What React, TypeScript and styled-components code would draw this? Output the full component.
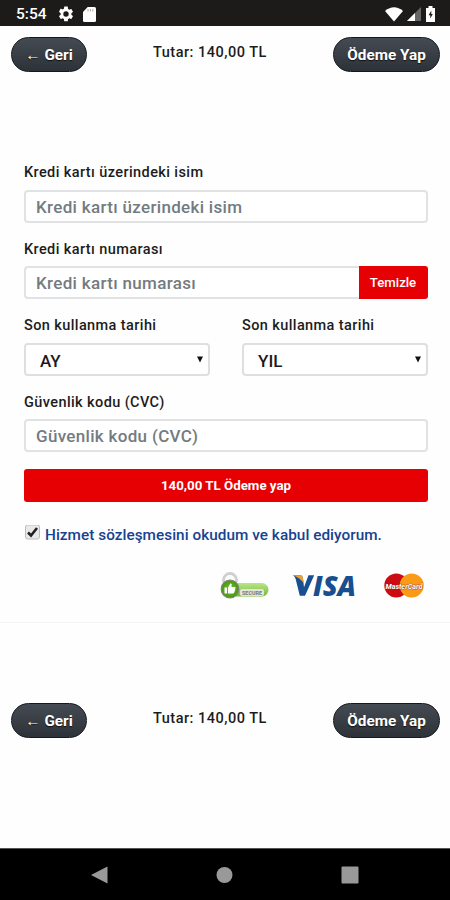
import React from 'react';
import styled, { createGlobalStyle } from 'styled-components';

const Global = createGlobalStyle`
  *, *::before, *::after { box-sizing: border-box; }
  body { margin: 0; background: #fefefe; font-family: Roboto, sans-serif; color: #1c1c1c; }
  input, button, select { font-family: inherit; }
`;

const Screen = styled.div`
  width: 450px;
  height: 900px;
  display: flex;
  flex-direction: column;
  background: #fefefe;
  overflow: hidden;
`;

const StatusBar = styled.header`
  height: 26px;
  flex: none;
  display: flex;
  align-items: center;
  padding: 2px 14px 0 16px;
  background: #1c1b19;
  color: #fff;
`;

const Clock = styled.span`
  width: 41px;
  font-size: 15.5px;
  font-weight: 500;
  line-height: 24px;
`;

const StatusGroup = styled.div<{ $gap: number; $end?: boolean }>`
  display: flex;
  align-items: center;
  gap: ${p => p.$gap}px;
  margin-left: ${p => (p.$end ? 'auto' : '0')};
  svg { display: block; }
`;

const ActionBar = styled.div`
  height: 35px;
  flex: none;
  display: grid;
  grid-template-columns: 76px 1fr 107px;
  padding: 0 10px 0 11px;
`;

const PillButton = styled.button`
  height: 35px;
  padding: 0;
  border: 1px solid #15191d;
  border-radius: 18px;
  background: linear-gradient(#454b52, #2c3238);
  color: #fff;
  font-size: 15.3px;
  font-weight: 700;
  text-shadow: 0 1px 1px #111;
  white-space: nowrap;
`;

const Total = styled.div`
  padding-left: 66px;
  font-size: 14.5px;
  font-weight: 500;
  line-height: 32px;
  letter-spacing: 0.5px;
  white-space: nowrap;
`;

const Card = styled.main`
  height: 551px;
  flex: none;
  padding: 91px 22px 0 24px;
  border-bottom: 1px solid #f5f5f5;
  margin-bottom: 80px;
`;

const Field = styled.div`
  height: 76.6px;
`;

const Label = styled.label`
  display: block;
  height: 26.5px;
  font-size: 14.5px;
  font-weight: 500;
  line-height: 20px;
  letter-spacing: 0.4px;
  white-space: nowrap;
`;

const InputGroup = styled.div`
  display: flex;
  height: 33px;
`;

const Input = styled.input<{ $joined?: boolean }>`
  flex: 1;
  min-width: 0;
  height: 33px;
  padding: 1px 10px 0;
  border: 2px solid #e0e2e3;
  border-right-width: ${p => (p.$joined ? 0 : 2)}px;
  border-radius: ${p => (p.$joined ? '4px 0 0 4px' : '4px')};
  background: #fff;
  font-size: 17px;
  font-weight: 500;
  letter-spacing: 0.32px;
  outline: none;
  &::placeholder { color: #747b80; opacity: 1; }
`;

const ClearButton = styled.button`
  width: 69px;
  border: 0;
  border-radius: 0 3px 3px 0;
  background: #e60004;
  color: #fff;
  padding: 0 1px 0 0;
  font-size: 13.2px;
  font-weight: 500;
`;

const DateRow = styled.div`
  display: grid;
  grid-template-columns: 186px 186px;
  column-gap: 32px;
`;

const SelectBox = styled.button`
  width: 100%;
  height: 33px;
  display: flex;
  align-items: center;
  justify-content: space-between;
  padding: 3px 5px 0 14px;
  border: 2px solid #dfdfdf;
  border-radius: 4px;
  background: #fff;
  color: #1a1a1a;
  font-size: 17px;
  font-weight: 500;
  svg { margin-bottom: 3px; }
`;

const PayButton = styled.button`
  display: block;
  width: 100%;
  height: 33px;
  margin-top: -0.4px;
  padding: 0;
  border: 0;
  border-radius: 3px;
  background: #e60004;
  color: #fff;
  font-size: 13.3px;
  font-weight: 700;
`;

const Agreement = styled.div`
  display: flex;
  height: 20px;
  margin-top: 22.6px;
  gap: 4px;
  color: #164391;
  font-size: 15.3px;
  font-weight: 500;
  line-height: 21px;
  letter-spacing: 0.05px;
  white-space: nowrap;
  svg { flex: none; }
`;

const Brands = styled.div`
  display: flex;
  justify-content: flex-end;
  align-items: center;
  height: 32px;
  margin-top: 25px;
  padding-right: 4px;
`;

const SecureIcon = styled.svg`
  margin: 3px 22px 0 0;
`;

const VisaIcon = styled.svg`
  margin-right: 26px;
`;

const NavBar = styled.nav`
  height: 52px;
  flex: none;
  margin-top: auto;
  display: flex;
  align-items: center;
  justify-content: space-between;
  padding: 0 91px;
  background: #000;
  border-top: 1px solid #555;
`;

const Spacer = styled.div`
  height: 11px;
  flex: none;
`;

const Actions = () => (
  <ActionBar>
    <PillButton>← Geri</PillButton>
    <Total>Tutar: 140,00 TL</Total>
    <PillButton>Ödeme Yap</PillButton>
  </ActionBar>
);

const Select = ({ value }: { value: string }) => (
  <SelectBox>
    {value}
    <svg width="6" height="7" viewBox="0 0 6 7"><path d="M0 .5h6L3 6.5z" fill="#111" /></svg>
  </SelectBox>
);

export default function App() {
  return (
    <Screen>
      <Global />
      <StatusBar>
        <Clock>5:54</Clock>
        <StatusGroup $gap={8}>
          <svg width="18" height="18" viewBox="0 0 24 24" fill="#fff">
            <path d="M19.14 12.94c.04-.3.06-.61.06-.94s-.02-.64-.07-.94l2.03-1.58a.5.5 0 0 0 .12-.61l-1.92-3.32a.49.49 0 0 0-.59-.22l-2.39.96a7 7 0 0 0-1.62-.94l-.36-2.54A.48.48 0 0 0 13.92 2h-3.84a.48.48 0 0 0-.47.41l-.36 2.54c-.59.24-1.13.57-1.62.94l-2.39-.96a.48.48 0 0 0-.59.22L2.74 8.87a.48.48 0 0 0 .12.61l2.03 1.58c-.05.3-.09.63-.09.94s.02.64.07.94l-2.03 1.58a.5.5 0 0 0-.12.61l1.92 3.32c.12.22.37.29.59.22l2.39-.96c.5.38 1.03.7 1.62.94l.36 2.54c.05.24.24.41.48.41h3.84c.24 0 .44-.17.47-.41l.36-2.54c.59-.24 1.13-.56 1.62-.94l2.39.96c.22.08.47 0 .59-.22l1.92-3.32a.48.48 0 0 0-.12-.61zM12 15.6a3.6 3.6 0 1 1 0-7.2 3.6 3.6 0 0 1 0 7.2z" />
          </svg>
          <svg width="13" height="15" viewBox="0 0 13 15">
            <path d="M4.7 0h6.8Q13 0 13 1.5v12Q13 15 11.5 15h-10Q0 15 0 13.5V5z" fill="#fff" />
            <path d="M5 2v2.5M7.4 2v2.5M9.8 2v2.5" stroke="#aaa" strokeWidth="1" />
          </svg>
        </StatusGroup>
        <StatusGroup $gap={4} $end>
          <svg width="18" height="15" viewBox="0 0 18 15"><path d="M0 4Q9-3.5 18 4L9 14.5z" fill="#fff" /></svg>
          <svg width="14" height="14" viewBox="0 0 14 14">
            <path d="M0 14 14 0v14z" fill="#666" /><path d="M0 14 8 6v8z" fill="#fff" />
          </svg>
          <svg width="11" height="16" viewBox="0 0 11 16">
            <path d="M3.5 0h4v2H10v14H1V2h2.5z" fill="#fff" />
            <path d="M6.3 4.5 3.6 9.3h1.7v3.2L7.8 8H6.3z" fill="#1c1b19" />
          </svg>
        </StatusGroup>
      </StatusBar>
      <Spacer />
      <Actions />
      <Card>
        <Field>
          <Label>Kredi kartı üzerindeki isim</Label>
          <InputGroup><Input placeholder="Kredi kartı üzerindeki isim" /></InputGroup>
        </Field>
        <Field>
          <Label>Kredi kartı numarası</Label>
          <InputGroup>
            <Input $joined placeholder="Kredi kartı numarası" />
            <ClearButton>Temizle</ClearButton>
          </InputGroup>
        </Field>
        <DateRow>
          <Field><Label>Son kullanma tarihi</Label><Select value="AY" /></Field>
          <Field><Label>Son kullanma tarihi</Label><Select value="YIL" /></Field>
        </DateRow>
        <Field>
          <Label>Güvenlik kodu (CVC)</Label>
          <InputGroup><Input placeholder="Güvenlik kodu (CVC)" /></InputGroup>
        </Field>
        <PayButton>140,00 TL Ödeme yap</PayButton>
        <Agreement>
          <svg width="17" height="17" viewBox="0 0 17 17">
            <rect x="1.5" y="0" width="14" height="14" rx="2" fill="#e9e9e9" stroke="#bdbdbd" />
            <path d="m4 7.5 3 3 6-7.5" fill="none" stroke="#222" strokeWidth="2.6" />
          </svg>
          <span>Hizmet sözleşmesini okudum ve kabul ediyorum.</span>
        </Agreement>
        <Brands>
          <SecureIcon width="50" height="30" viewBox="0 0 50 30">
            <defs>
              <linearGradient id="pill" x2="0" y2="1"><stop stopColor="#b9e58b" /><stop offset="1" stopColor="#75bd2d" /></linearGradient>
              <radialGradient id="disc"><stop stopColor="#76ca24" /><stop offset="1" stopColor="#459510" /></radialGradient>
            </defs>
            <path d="M3.500 10V8a6.500 6.500 0 0 1 13 0v2" fill="none" stroke="#d0d0d0" strokeWidth="2.800" />
            <rect x="10" y="11" width="38.500" height="13.500" rx="6.500" fill="url(#pill)" />
            <rect x="20" y="17" width="24" height="7" rx="2" fill="#e2e5df" />
            <text x="22" y="23" fontSize="6" fontWeight="700" fill="#777" textLength="20" lengthAdjust="spacingAndGlyphs">SECURE</text>
            <circle cx="10" cy="17" r="8.800" fill="url(#disc)" stroke="#7b8573" strokeWidth="1.200" />
            <path d="M4.500 15.500h2.500v6H4.500zM8 15.800l2.300-4.300c2 0 1.500 2 1 3.500h3.700c1 .5.500 1.500 0 2 .4.700.2 1.200-.3 1.700.2.700 0 1-.4 1.400 0 .9-.4 1.400-1.300 1.400h-5z" fill="#fff" />
          </SecureIcon>
          <VisaIcon width="66" height="42" viewBox="-1 -9 66 42">
            <path d="M15.500 1.300h5.700L12 21.700H6.800L2.500 4.500Q1.500 2 0 1.300h7.300q2 0 2.500 2l1.200 10z" fill="#194e91" />
            <path d="M0 1.300h7.300q2 0 2.500 2l.9 6Q7.200 4 0 1.300z" fill="#eda32f" />
            <text x="20" y="21.700" fontFamily="Open Sans" fontSize="28" fontWeight="800" fontStyle="italic" fill="#194e91" textLength="43" lengthAdjust="spacingAndGlyphs">ISA</text>
          </VisaIcon>
          <svg width="40" height="25" viewBox="0 0 40 25">
            <circle cx="12.300" cy="12.500" r="12" fill="#cc0c12" />
            <circle cx="27.700" cy="12.500" r="12" fill="#f99b17" />
            <text x="1.500" y="15.500" fontSize="7.500" fontWeight="700" fontStyle="italic" fill="#fff" stroke="#8e2929" strokeWidth=".7" paintOrder="stroke" textLength="37" lengthAdjust="spacingAndGlyphs">MasterCard</text>
          </svg>
        </Brands>
      </Card>
      <Actions />
      <NavBar>
        <svg width="17" height="18" viewBox="0 0 17 18"><path d="M0 9 16.500.500v17z" fill="#999" /></svg>
        <svg width="17" height="18" viewBox="0 0 17 18"><circle cx="8.500" cy="9" r="8" fill="#999" /></svg>
        <svg width="18" height="18" viewBox="0 0 18 18"><rect x=".500" y=".500" width="17" height="17" rx="1" fill="#999" /></svg>
      </NavBar>
    </Screen>
  );
}
